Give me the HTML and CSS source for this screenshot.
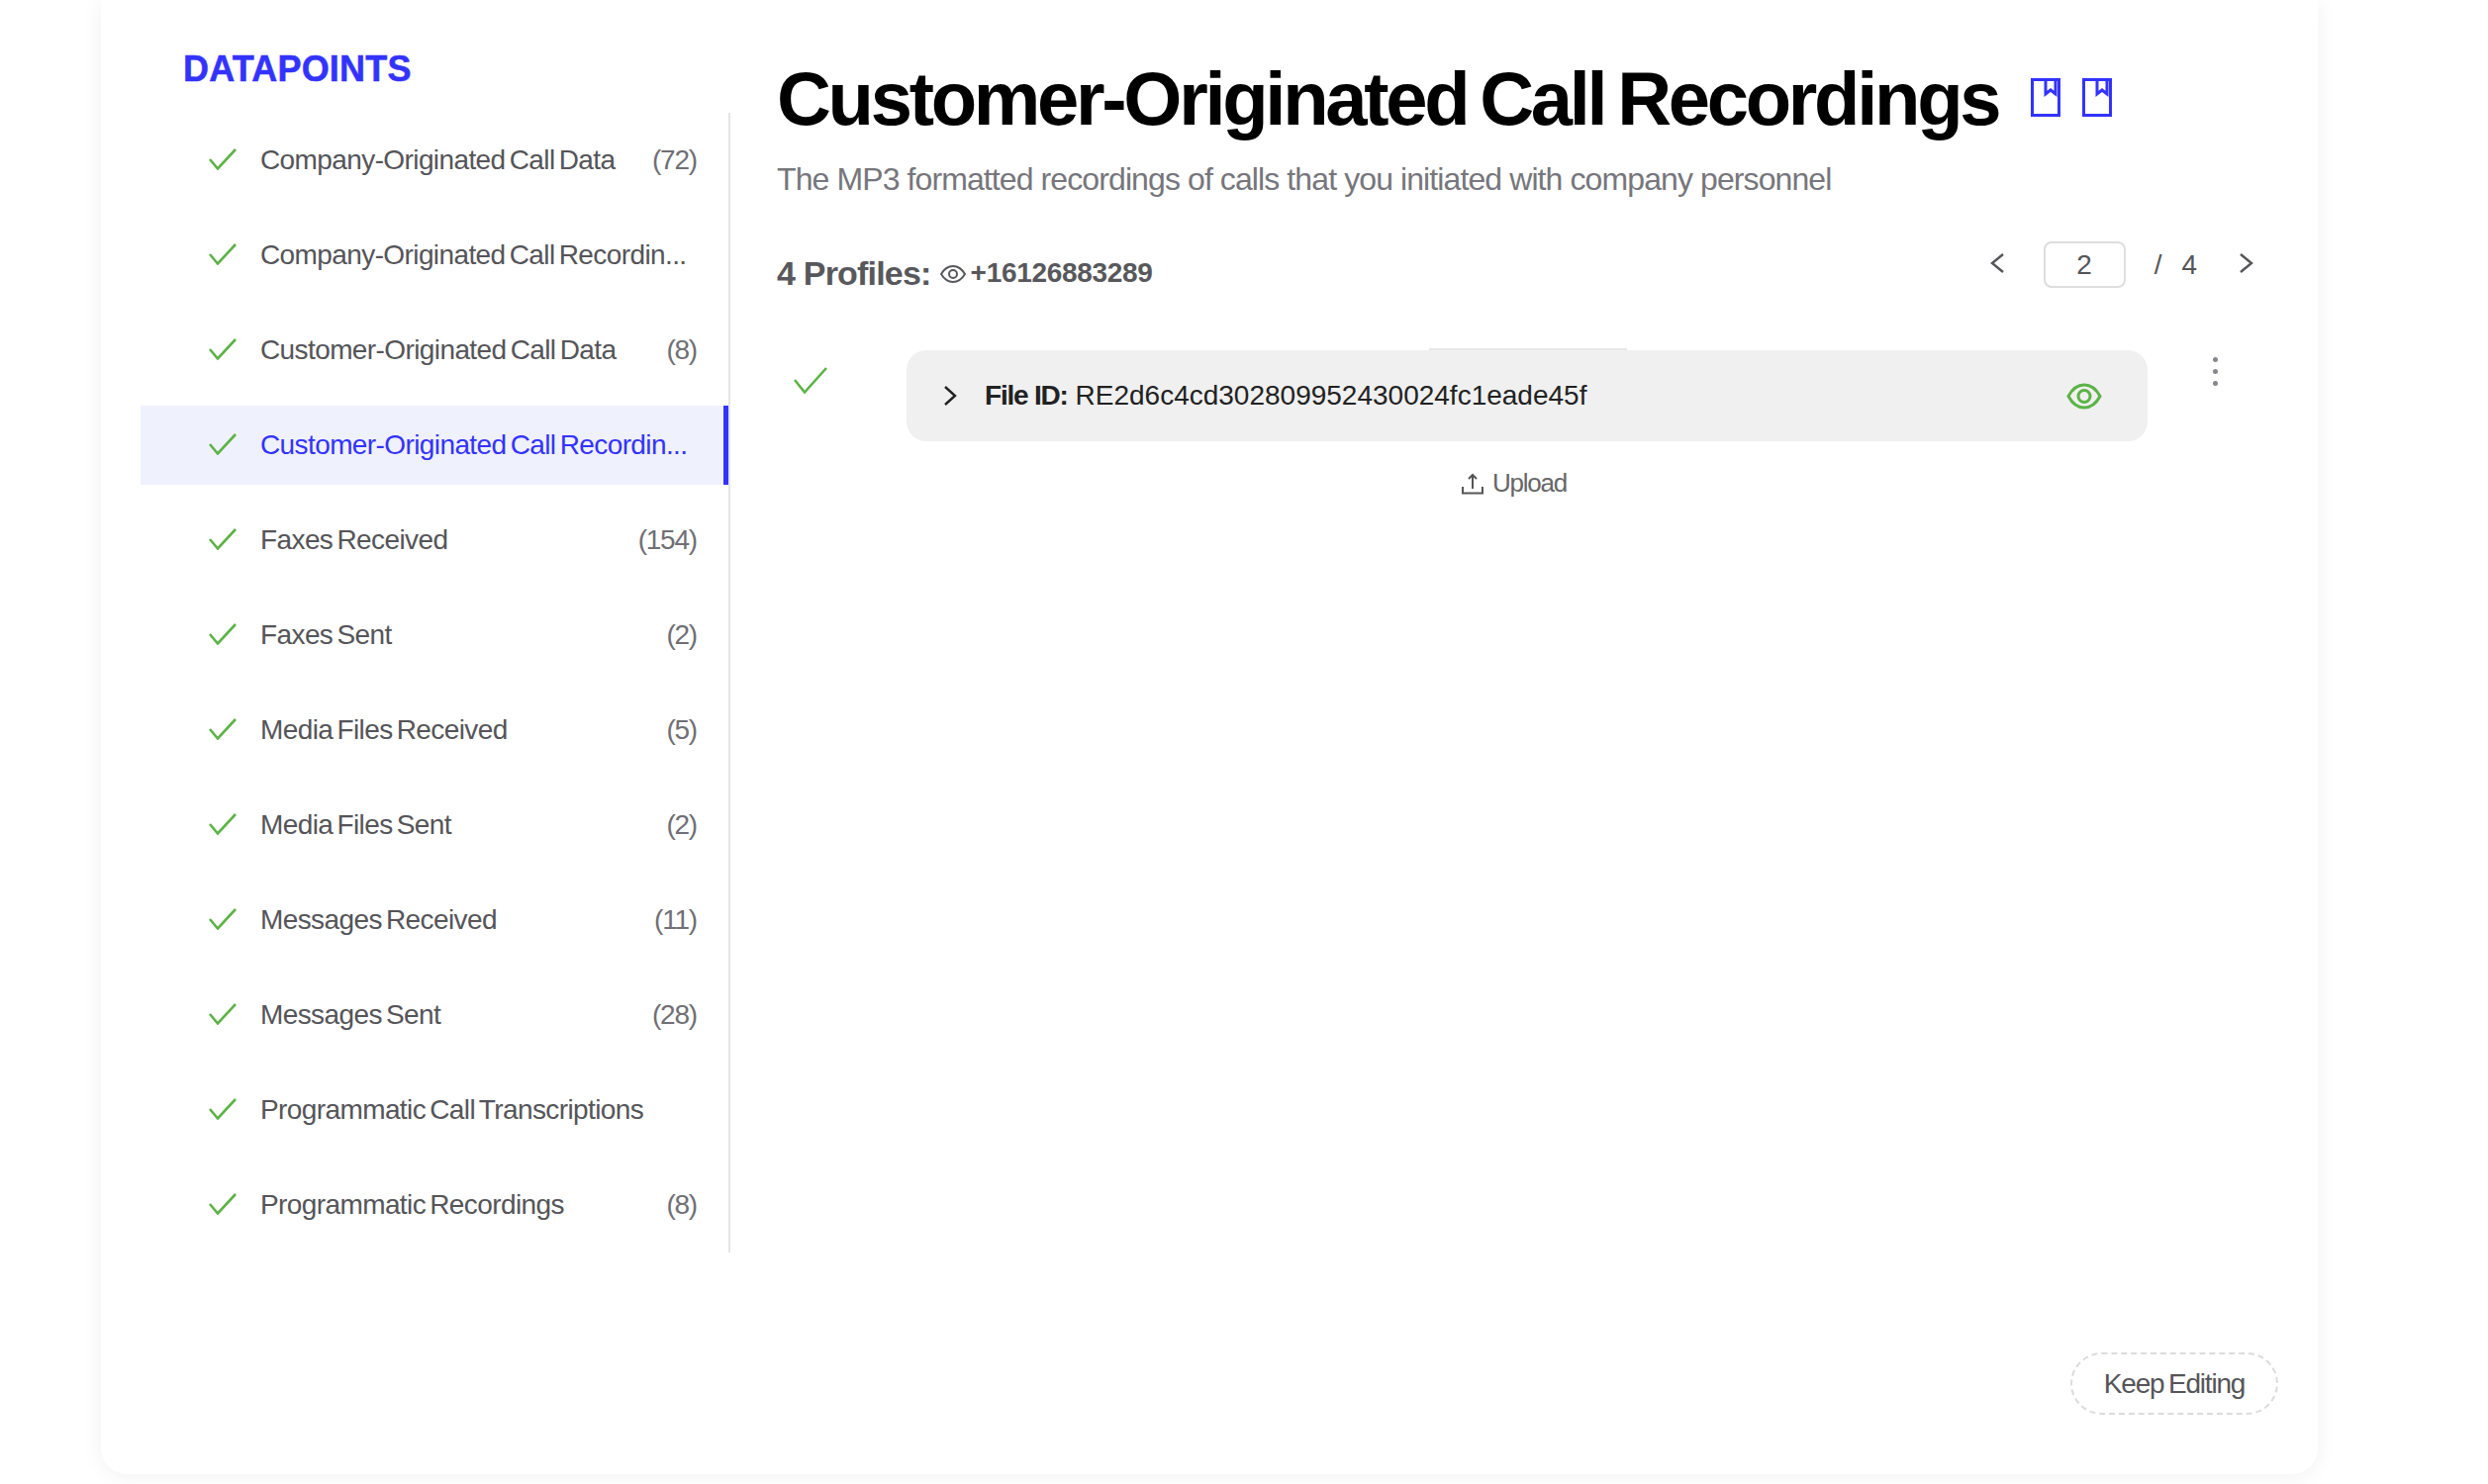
FILE: index.html
```html
<!DOCTYPE html>
<html lang="en">
<head>
<meta charset="utf-8">
<title>Customer-Originated Call Recordings</title>
<link rel="stylesheet" href="styles.css">
</head>
<body>
<div class="page">
  <div class="card">
    <aside class="sidebar">
      <h2 class="side-title">DATAPOINTS</h2>
      <ul class="list">
        <li class="item"><svg class="check" viewBox="0 0 28 22"><path d="M1 11l8 9.5L27 1"/></svg><span class="label">Company-Originated Call Data</span><span class="count">(72)</span></li>
        <li class="item"><svg class="check" viewBox="0 0 28 22"><path d="M1 11l8 9.5L27 1"/></svg><span class="label">Company-Originated Call Recordin...</span></li>
        <li class="item"><svg class="check" viewBox="0 0 28 22"><path d="M1 11l8 9.5L27 1"/></svg><span class="label">Customer-Originated Call Data</span><span class="count">(8)</span></li>
        <li class="item active"><svg class="check" viewBox="0 0 28 22"><path d="M1 11l8 9.5L27 1"/></svg><span class="label">Customer-Originated Call Recordin...</span></li>
        <li class="item"><svg class="check" viewBox="0 0 28 22"><path d="M1 11l8 9.5L27 1"/></svg><span class="label">Faxes Received</span><span class="count">(154)</span></li>
        <li class="item"><svg class="check" viewBox="0 0 28 22"><path d="M1 11l8 9.5L27 1"/></svg><span class="label">Faxes Sent</span><span class="count">(2)</span></li>
        <li class="item"><svg class="check" viewBox="0 0 28 22"><path d="M1 11l8 9.5L27 1"/></svg><span class="label">Media Files Received</span><span class="count">(5)</span></li>
        <li class="item"><svg class="check" viewBox="0 0 28 22"><path d="M1 11l8 9.5L27 1"/></svg><span class="label">Media Files Sent</span><span class="count">(2)</span></li>
        <li class="item"><svg class="check" viewBox="0 0 28 22"><path d="M1 11l8 9.5L27 1"/></svg><span class="label">Messages Received</span><span class="count">(11)</span></li>
        <li class="item"><svg class="check" viewBox="0 0 28 22"><path d="M1 11l8 9.5L27 1"/></svg><span class="label">Messages Sent</span><span class="count">(28)</span></li>
        <li class="item"><svg class="check" viewBox="0 0 28 22"><path d="M1 11l8 9.5L27 1"/></svg><span class="label">Programmatic Call Transcriptions</span></li>
        <li class="item"><svg class="check" viewBox="0 0 28 22"><path d="M1 11l8 9.5L27 1"/></svg><span class="label">Programmatic Recordings</span><span class="count">(8)</span></li>
      </ul>
    </aside>
    <main class="main">
      <div class="title-row">
        <h1 class="title">Customer-Originated Call Recordings</h1>
        <svg class="bookmark first" viewBox="0 0 30 39"><path d="M1.5 1.5h27v36h-27zM15 1.5V16l5-4 5 4V1.5"/></svg>
        <svg class="bookmark" viewBox="0 0 30 39"><path d="M1.5 1.5h27v36h-27zM15 1.5V16l5-4 5 4V1.5"/></svg>
      </div>
      <p class="subtitle">The MP3 formatted recordings of calls that you initiated with company personnel</p>
      <div class="profile-row">
        <div class="profiles">
          <span class="profiles-count">4 Profiles:</span>
          <svg class="eye-small" viewBox="0 0 26 18"><path d="M1 9c3-5 7-8 12-8s9 3 12 8c-3 5-7 8-12 8S4 14 1 9z"/><circle cx="13" cy="9" r="4"/></svg>
          <span class="profiles-number">+16126883289</span>
        </div>
        <div class="pager">
          <svg class="pager-chev" viewBox="0 0 14 20"><path d="M13 1L2 10l11 9"/></svg>
          <span class="pager-input">2</span>
          <span class="pager-slash">/</span>
          <span class="pager-total">4</span>
          <svg class="pager-chev" viewBox="0 0 14 20"><path d="M1 1l11 9-11 9"/></svg>
        </div>
      </div>
      <div class="file-row">
        <svg class="check-big" viewBox="0 0 34 27"><path d="M1 13l10 12.5L33 1"/></svg>
        <div class="file-card">
          <svg class="file-chev" viewBox="0 0 14 20"><path d="M2 1l10 9-10 9"/></svg>
          <div class="file-text"><b>File ID:</b> RE2d6c4cd302809952430024fc1eade45f</div>
          <svg class="eye-green" viewBox="0 0 36 27"><path d="M2 13.5C6 6 11 2 18 2s12 4 16 11.5C30 21 25 25 18 25S6 21 2 13.5z"/><circle cx="18" cy="13.5" r="6"/></svg>
        </div>
        <div class="dots"><i></i><i></i><i></i></div>
      </div>
      <div class="upload">
        <svg class="upload-icon" viewBox="0 0 22 22"><path d="M11 16V2M7 6l4-4 4 4M1 14v6.5h20V14"/></svg>
        <span>Upload</span>
      </div>
      <div class="footer"><button class="keep">Keep Editing</button></div>
    </main>
  </div>
</div>
</body>
</html>
```
FILE: styles.css
```css
* { box-sizing: border-box; }
html, body { margin: 0; padding: 0; background: #fff; }
body { font-family: "Liberation Sans", Arial, sans-serif; color: #555559; }
.page { width: 2514px; height: 1500px; overflow: hidden; padding-left: 102px; }
.card { position: relative; display: flex; width: 2240px; height: 1490px; background: #fff; border-radius: 0 0 26px 26px; box-shadow: 0 2px 22px rgba(0,0,0,.06); }
.sidebar { width: 636px; padding: 0 0 0 40px; flex: none; }
.side-title { margin: 0; padding: 51px 0 0 43px; height: 114px; font-size: 36px; line-height: 38px; font-weight: 700; color: #3333ff; letter-spacing: .2px; -webkit-text-stroke: .5px #3333ff; }
.list { list-style: none; margin: 0; padding: 0; width: 596px; height: 1152px; border-right: 2px solid #e5e5e5; }
.item { display: flex; align-items: center; height: 96px; padding: 0 32px 0 69px; font-size: 28px; letter-spacing: -.6px; word-spacing: -3px; }
.item .label { flex: 1; white-space: nowrap; color: #555559; margin-left: 24px; }
.item .count { color: #6f6f75; letter-spacing: -1.2px; }
.check { width: 28px; height: 22px; flex: none; margin-top: -2px; }
.check path, .check-big path { fill: none; stroke: #5cb346; stroke-width: 2.6; }
.item.active { position: relative; height: 80px; margin: 8px 0; background: #eff1fd; box-shadow: inset -5px 0 0 #3333ff; }
.item.active .label { color: #3333ff; }
.main { flex: 1; display: flex; flex-direction: column; padding: 0 40px 60px 47px; }
.title-row { display: flex; align-items: center; height: 150px; padding-top: 50px; }
.title { margin: 0 11px 0 0; font-size: 76px; line-height: 100px; font-weight: 700; color: #000; letter-spacing: -3.3px; word-spacing: -5px; white-space: nowrap; }
.bookmark { width: 30px; height: 39px; margin: -4px 0 0 22px; flex: none; }
.bookmark path { fill: none; stroke: #3333ff; stroke-width: 3; }
.subtitle { margin: 11px 0 0; font-size: 32px; line-height: 40px; color: #76767c; letter-spacing: -.9px; white-space: nowrap; }
.profile-row { display: flex; justify-content: space-between; align-items: flex-start; margin-top: 53px; padding-right: 25px; }
.profiles { display: flex; align-items: center; height: 44px; color: #58585c; font-weight: 700; }
.profiles-count { font-size: 34px; letter-spacing: -.8px; }
.profiles-number { font-size: 28px; letter-spacing: -.3px; }
.eye-small { width: 26px; height: 18px; margin: 2px 5px 0 9px; }
.eye-small path, .eye-small circle { fill: none; stroke: #58585c; stroke-width: 2; }
.pager { display: flex; align-items: center; height: 47px; margin-top: -10px; font-size: 28px; color: #555559; }
.pager-chev { width: 14px; height: 20px; margin-top: -4px; }
.pager-chev path { fill: none; stroke: #555559; stroke-width: 2.4; }
.pager-input { display: flex; align-items: center; justify-content: center; width: 83px; height: 47px; margin: 0 20px 0 40px; border: 2px solid #dedede; border-radius: 8px; }
.pager-slash { margin: 0 20px 0 9px; }
.pager-total { margin-right: 43px; }
.file-row { display: flex; align-items: flex-start; margin-top: 56px; padding-left: 17px; }
.check-big { width: 34px; height: 27px; margin-top: 17px; flex: none; }
.file-card { position: relative; display: flex; align-items: center; width: 1254px; height: 92px; margin-left: 80px; padding: 0 46px 0 37px; background: #f0f0f0; border-radius: 20px; }
.file-card::before { content: ""; position: absolute; left: 528px; top: -2px; width: 200px; height: 2px; background: #e8e8e8; }
.file-chev { width: 14px; height: 20px; flex: none; }
.file-chev path { fill: none; stroke: #222; stroke-width: 2.4; }
.file-text { flex: 1; margin-left: 28px; font-size: 28px; color: #222; white-space: nowrap; }
.file-text b { letter-spacing: -1.2px; }
.eye-green { width: 36px; height: 27px; }
.eye-green path, .eye-green circle { fill: none; stroke: #5cb346; stroke-width: 3; }
.dots { display: flex; flex-direction: column; gap: 7px; margin: 7px 0 0 66px; }
.dots i { display: block; width: 5px; height: 5px; border-radius: 50%; background: #86868c; }
.upload { display: flex; align-items: center; justify-content: center; gap: 9px; margin-top: 27px; padding-right: 27px; font-size: 26px; color: #666; letter-spacing: -1.2px; }
.upload-icon { width: 22px; height: 22px; }
.upload-icon path { fill: none; stroke: #555; stroke-width: 2; }
.footer { margin-top: auto; display: flex; justify-content: flex-end; }
.keep { width: 210px; height: 63px; padding: 0; background: #fff; border: 2px dashed #dcdcdc; border-radius: 32px; font-family: inherit; font-size: 28px; letter-spacing: -1.2px; word-spacing: -2px; color: #555559; }
```
